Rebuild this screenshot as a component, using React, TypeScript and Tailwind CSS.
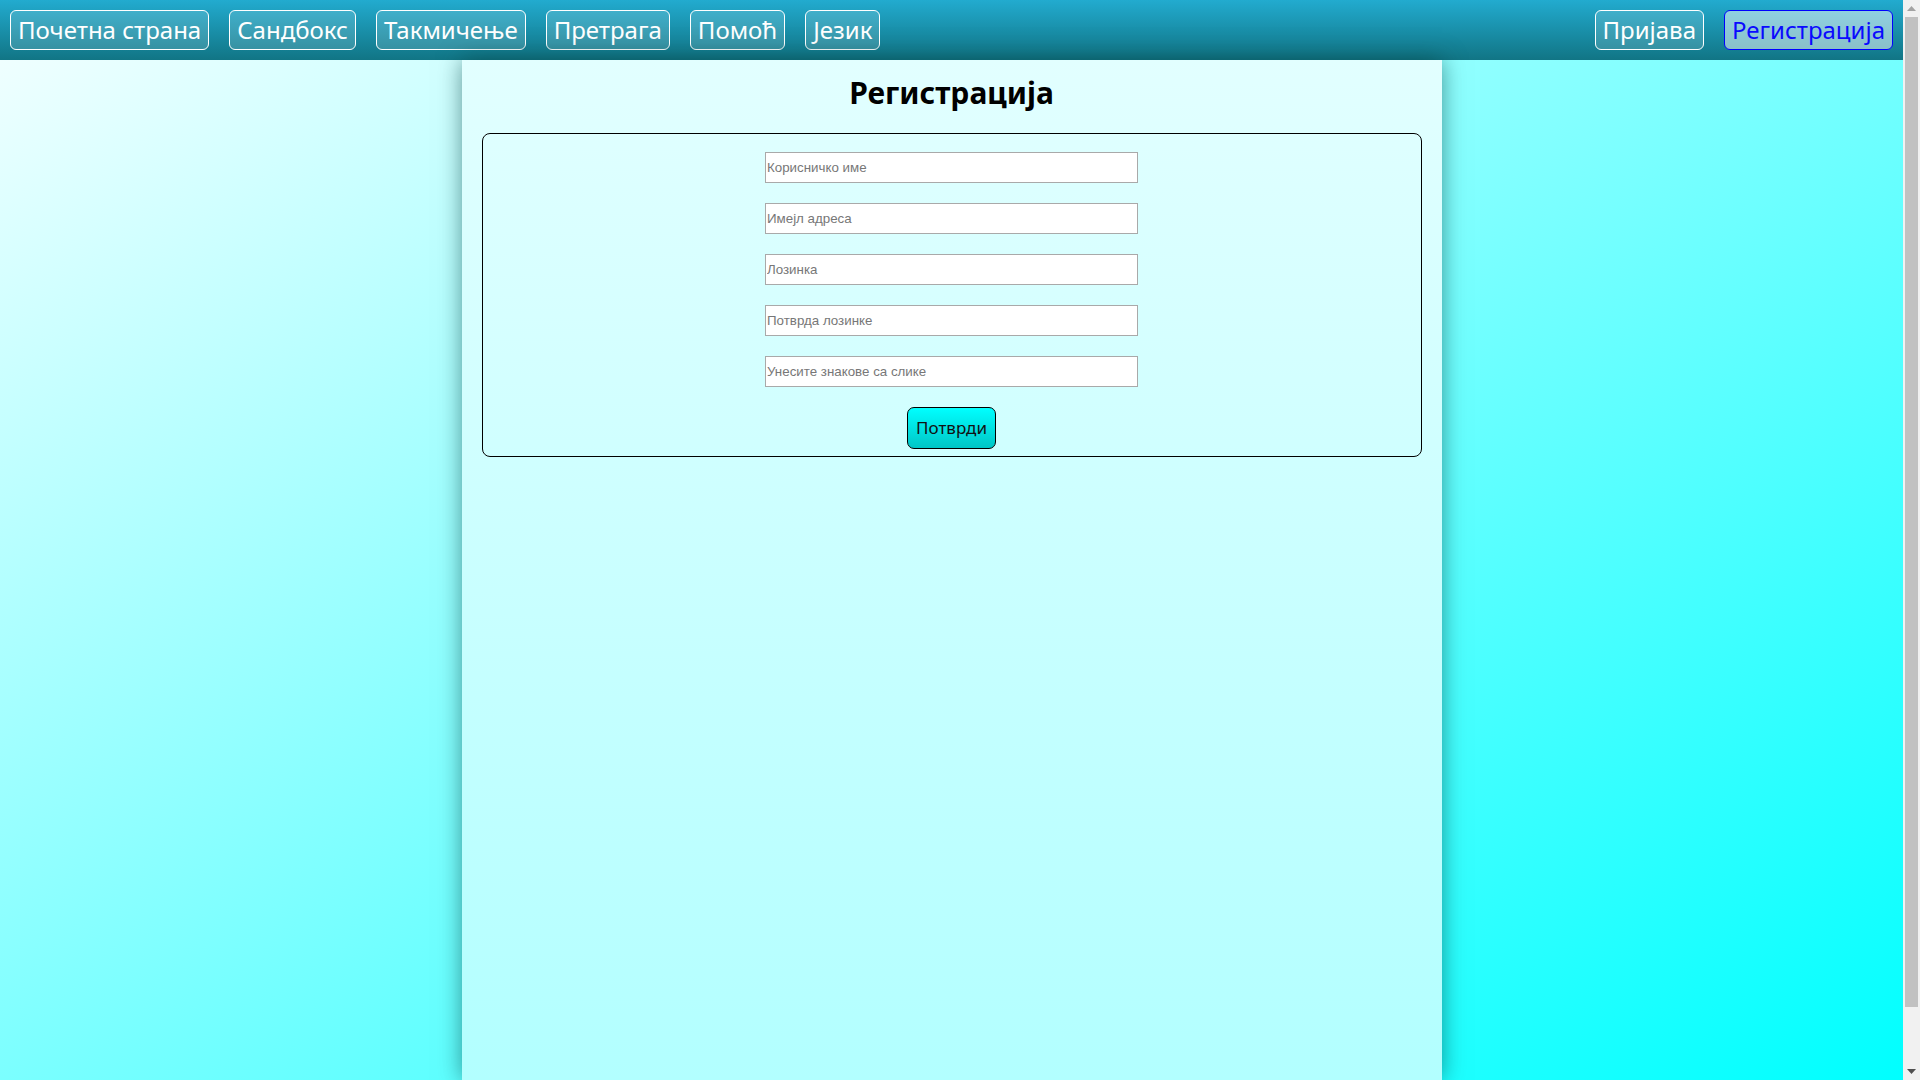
import React from "react";

const leftLinks = ["Почетна страна", "Сандбокс", "Такмичење", "Претрага", "Помоћ", "Језик"];
const fields = [
  "Корисничко име",
  "Имејл адреса",
  "Лозинка",
  "Потврда лозинке",
  "Унесите знакове са слике",
];

const NavButton = ({ label, active }: { label: string; active?: boolean }) => (
  <a
    href="#"
    className={
      active
        ? "h-10 flex items-center px-[7px] rounded-[6px] border border-[#0000ff] bg-white/50 text-[#0a0aff] text-[24px] leading-none"
        : "h-10 flex items-center px-[7px] rounded-[6px] border border-white bg-white/15 text-white text-[24px] leading-none"
    }
  >
    {label}
  </a>
);

// the browser's scrollbar from the screenshot
const ScrollBar = () => (
  <div className="w-[17px] h-full flex flex-col bg-[#f1f1f1]">
    <div className="h-[17px] flex items-center justify-center">
      <svg width="9" height="5" viewBox="0 0 9 5">
        <path d="M0 5 L4.5 0 L9 5 Z" fill="#a3a3a3" />
      </svg>
    </div>
    <div className="mx-[2px] h-[990px] bg-[#c1c1c1]" />
    <div className="flex-1" />
    <div className="h-[17px] flex items-center justify-center">
      <svg width="9" height="5" viewBox="0 0 9 5">
        <path d="M0 0 L9 0 L4.5 5 Z" fill="#505050" />
      </svg>
    </div>
  </div>
);

const App = () => {
  return (
    <div className="h-screen flex overflow-hidden font-['Noto_Sans',sans-serif]">
      <div className="flex-1 flex flex-col bg-linear-to-br/srgb from-[#f6ffff] to-[#00ffff]">
        <nav className="h-[60px] shrink-0 flex items-center justify-between px-[10px] bg-linear-to-b/srgb from-[#22abcf] to-[#117585]">
          <div className="flex gap-5">
            {leftLinks.map((l) => (
              <NavButton key={l} label={l} />
            ))}
          </div>
          <div className="flex gap-5">
            <NavButton label="Пријава" />
            <NavButton label="Регистрација" active />
          </div>
        </nav>
        <main className="flex-1 w-[980px] mx-auto px-5 bg-linear-to-b/srgb from-[#e2ffff] to-[#b2ffff] shadow-[0_0_22px_rgba(0,60,60,0.55)]">
          <h1 className="text-[30px] font-bold text-black text-center leading-none pt-[18px] pb-[25px]">
            Регистрација
          </h1>
          <form className="flex flex-col items-center gap-5 border border-black rounded-[8px] pt-[18px] pb-[7px]">
            {fields.map((f) => (
              <input
                key={f}
                type="text"
                placeholder={f}
                className="w-[373px] h-[31px] bg-white border border-[#a9a9a9] px-[1px] text-[13.33px] font-['Liberation_Sans',sans-serif] placeholder:text-[#777] outline-none"
              />
            ))}
            <button
              type="button"
              className="h-[42px] w-[89px] rounded-[7px] border border-black bg-linear-to-b/srgb from-[#00ffff] to-[#00c6c6] text-[17px] text-[#111]"
            >
              Потврди
            </button>
          </form>
        </main>
      </div>
      <ScrollBar />
    </div>
  );
};

export default App;
